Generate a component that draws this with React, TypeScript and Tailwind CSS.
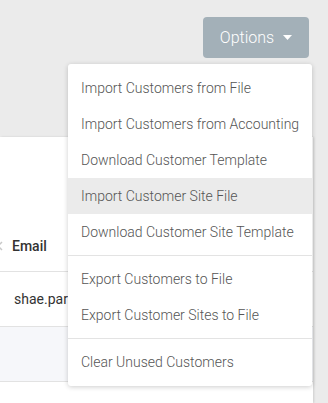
import { useState } from 'react';

const groups = [
  [
    'Import Customers from File',
    'Import Customers from Accounting',
    'Download Customer Template',
    'Import Customer Site File',
    'Download Customer Site Template',
  ],
  ['Export Customers to File', 'Export Customer Sites to File'],
  ['Clear Unused Customers'],
];

export default function App() {
  const [hovered, setHovered] = useState('Import Customer Site File');

  return (
    <div
      className="relative w-full h-[403px] overflow-hidden bg-[#ebebeb] flex flex-col"
      style={{ fontFamily: 'Roboto, "Liberation Sans", sans-serif' }}
    >
      {/* top bar */}
      <div className="h-[137px] shrink-0 flex justify-end items-start pt-[17px] pr-[19px]">
        <button className="h-[41px] w-[106px] rounded-[4px] bg-[#a3b0b8] text-white text-[16px] font-light flex items-center justify-center gap-[9px]">
          <span>Options</span>
          <svg width="9" height="5" viewBox="0 0 9 5">
            <path d="M0 0h9L4.5 5z" fill="#ffffff" />
          </svg>
        </button>
      </div>

      {/* customers card */}
      <div className="flex-1 mr-[15px] bg-white shadow-[1px_0_2px_rgba(0,0,0,0.12)]">
        <div className="h-[84px]" />
        <div className="h-[51px] flex items-center border-b border-[#e2e2e2] text-[14px] font-medium text-[#333]">
          <svg width="6" height="10" viewBox="0 0 6 10" className="-ml-[3px] mr-[9px]">
            <path d="M5 1L1 5l4 4" stroke="#c8c8c8" strokeWidth="1.5" fill="none" />
          </svg>
          <span>Email</span>
        </div>
        <div className="h-[55px] flex items-center pl-[14px] border-b border-[#e2e2e2] text-[14px] text-[#333]">
          shae.parker@example.com
        </div>
        <div className="h-[55px] bg-[#f6f7fa] border-b border-[#e2e2e2]" />
      </div>

      {/* options menu */}
      <div className="absolute top-[64px] left-[68px] w-[244px] bg-white rounded-[3px] shadow-[0_1px_5px_rgba(0,0,0,0.2)] py-[6px]">
        {groups.map((items, gi) => (
          <div key={gi}>
            {gi > 0 && <div className="h-px bg-[#e3e3e3] my-[5px]" />}
            {items.map((label) => (
              <div
                key={label}
                onMouseEnter={() => setHovered(label)}
                className={`h-[36px] flex items-center pl-[13px] text-[14px] font-light text-[#555] whitespace-nowrap cursor-pointer ${
                  hovered === label ? 'bg-[#ebebeb]' : ''
                }`}
              >
                {label}
              </div>
            ))}
          </div>
        ))}
      </div>
    </div>
  );
}
